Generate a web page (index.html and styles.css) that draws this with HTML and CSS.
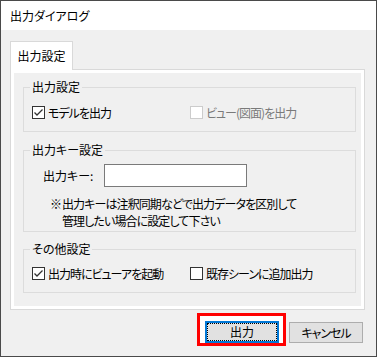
FILE: index.html
```html
<!DOCTYPE html>
<html lang="ja">
  <head>
    <meta charset="UTF-8" />
    <title>出力ダイアログ</title>
    <link rel="stylesheet" href="styles.css">
  </head>
  <body>
    <div class="window">
      <div class="titlebar">出力ダイアログ</div>

      <div class="content">
        <!-- Tabs -->
        <div class="tabs">
          <div class="tab">出力設定</div>
        </div>

        <div class="panel">
          <div class="panel-body">
            <!-- 出力設定 -->
            <div class="group group-output">
              <span class="group-title">出力設定</span>
              <div class="check-row">
                <label class="check">
                  <svg class="box" width="13" height="13" viewBox="0 0 13 13"><rect x="0.5" y="0.5" width="12" height="12" fill="#fff" stroke="#333"/><polyline points="2.5,6.5 5,9 10.5,3.5" fill="none" stroke="#333" stroke-width="1.3"/></svg>
                  モデルを出力
                </label>
                <label class="check disabled">
                  <svg class="box" width="13" height="13" viewBox="0 0 13 13"><rect x="0.5" y="0.5" width="12" height="12" fill="#fff" stroke="#ccc"/></svg>
                  ビュー(図面)を出力
                </label>
              </div>
            </div>

            <!-- 出力キー設定 -->
            <div class="group group-key">
              <span class="group-title">出力キー設定</span>
              <div class="key-row">
                <span class="key-label">出力キー:</span>
                <input type="text" class="key-input" />
              </div>
              <div class="note">
                <span class="note-mark">※</span>
                <span class="note-text">出力キーは注釈同期などで出力データを区別して<br />管理したい場合に設定して下さい</span>
              </div>
            </div>

            <!-- その他設定 -->
            <div class="group group-other">
              <span class="group-title">その他設定</span>
              <div class="check-row">
                <label class="check">
                  <svg class="box" width="13" height="13" viewBox="0 0 13 13"><rect x="0.5" y="0.5" width="12" height="12" fill="#fff" stroke="#333"/><polyline points="2.5,6.5 5,9 10.5,3.5" fill="none" stroke="#333" stroke-width="1.3"/></svg>
                  出力時にビューアを起動
                </label>
                <label class="check">
                  <svg class="box" width="13" height="13" viewBox="0 0 13 13"><rect x="0.5" y="0.5" width="12" height="12" fill="#fff" stroke="#333"/></svg>
                  既存シーンに追加出力
                </label>
              </div>
            </div>
          </div>
        </div>

        <!-- Buttons -->
        <div class="buttons">
          <div class="highlight">
            <button class="btn btn-default">出力</button>
          </div>
          <button class="btn btn-cancel">キャンセル</button>
        </div>
      </div>
    </div>
  </body>
</html>
```

FILE: styles.css
```css
body {
  margin: 0;
  background-color: #3c3c3c;
  font-family: "Noto Sans CJK JP", "Noto Sans", sans-serif;
  font-size: 12px;
  font-feature-settings: "palt";
  color: #000;
}
.window {
  width: 375px;
  height: 355px;
  border: 1px solid #4a4a4a;
  background-color: #f0f0f0;
  display: flex;
  flex-direction: column;
}
.titlebar {
  height: 29px;
  background-color: #fff;
  padding-left: 9px;
  display: flex;
  align-items: center;
  line-height: 14px;
}
.content {
  padding: 11px 11px 0 9px;
}
.tabs {
  display: flex;
}
.tab {
  width: 61px;
  height: 28px;
  border: 1px solid #d9d9d9;
  border-bottom: none;
  background-color: #fff;
  margin-bottom: -1px;
  position: relative;
  z-index: 1;
  display: flex;
  justify-content: center;
  align-items: center;
  line-height: 14px;
}
.panel {
  width: 355px;
  border: 1px solid #d9d9d9;
  background-color: #fff;
  padding: 3px;
  box-sizing: border-box;
}
.panel-body {
  height: 233px;
  background-color: #f0f0f0;
  overflow: hidden;
}
.group {
  position: relative;
  width: 333px;
  margin-left: 9px;
  border: 1px solid #dcdcdc;
  box-sizing: border-box;
}
.group-title {
  position: absolute;
  top: -8px;
  left: 6px;
  padding: 0 2px;
  background-color: #f0f0f0;
  line-height: 14px;
}
.group-output {
  margin-top: 14px;
  padding: 18px 8px 12px;
}
.group-key {
  margin-top: 18px;
  height: 82px;
  padding: 13px 0 0 19px;
}
.group-other {
  margin-top: 17px;
  padding: 17px 8px 12px;
}
.check-row {
  display: flex;
}
.check {
  display: flex;
  align-items: center;
  gap: 3px;
  height: 13px;
  line-height: 13px;
  white-space: nowrap;
  letter-spacing: -1px;
}
.check:first-child {
  width: 158px;
}
.check .box {
  flex-shrink: 0;
}
.check.disabled {
  color: #7a7a7a;
}
.key-row {
  display: flex;
  align-items: center;
}
.key-label {
  width: 61px;
  line-height: 14px;
}
.key-input {
  width: 143px;
  height: 23px;
  box-sizing: border-box;
  border: 1px solid #7a7a7a;
  background-color: #fff;
  margin: 0;
  padding: 0;
}
.note {
  display: flex;
  margin-top: 8px;
  padding-left: 7px;
  line-height: 17px;
}
.note-mark {
  width: 12px;
}
.note-text {
  letter-spacing: -0.9px;
}
.buttons {
  display: flex;
  justify-content: flex-end;
  align-items: flex-start;
  margin-top: 3px;
  margin-right: 2px;
}
.highlight {
  border: 3px solid #ff0000;
  background-color: #fff;
  padding: 5px 4px 0 5px;
}
.btn {
  width: 74px;
  height: 22px;
  margin: 0;
  padding: 0;
  background-color: #e1e1e1;
  border: 1px solid #adadad;
  font-family: inherit;
  font-size: 12px;
  font-feature-settings: "palt";
  color: #000;
  line-height: 14px;
}
.btn-default {
  position: relative;
  border: 2px solid #0078d7;
}
.btn-default::after {
  content: "";
  position: absolute;
  inset: 0;
  border: 1px dotted #000;
}
.btn-cancel {
  height: 21px;
  margin-top: 9px;
  margin-left: 3px;
  letter-spacing: -1px;
}
```
